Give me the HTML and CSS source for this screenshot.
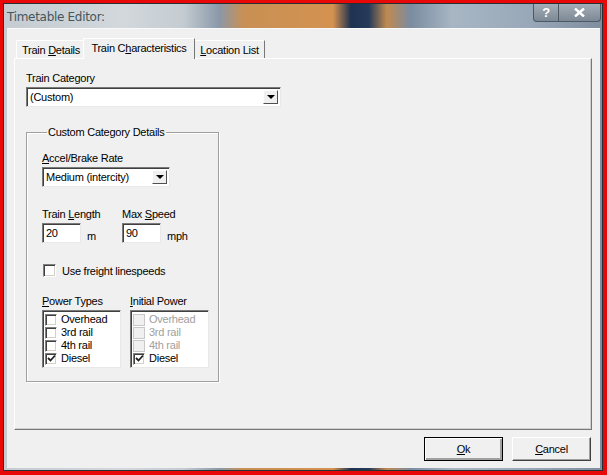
FILE: index.html
```html
<!DOCTYPE html>
<html>
<head>
<meta charset="utf-8">
<link rel="stylesheet" href="styles.css">
</head>
<body>
<div class="window">
  <div class="titlebar">
    <span class="title">Timetable Editor:</span>
    <div class="caption-btns">
      <span class="cbtn help">?</span>
      <span class="cbtn close">
        <svg width="11" height="9" viewBox="0 0 11 9"><path d="M1 0.5 L10 8.5 M10 0.5 L1 8.5" stroke="#fff" stroke-width="2.4"/></svg>
      </span>
    </div>
  </div>
  <div class="client">
    <div class="tabs">
      <div class="tab t1">Train <u>D</u>etails</div>
      <div class="tab active">Train C<u>h</u>aracteristics</div>
      <div class="tab t3"><u>L</u>ocation List</div>
    </div>
    <div class="panel">
      <div class="label">Train Category</div>
      <div class="combo wide"><span class="val">(Custom)</span><span class="arrow"></span></div>
      <fieldset class="group">
        <legend>Custom Category Details</legend>
        <div class="label"><u>A</u>ccel/Brake Rate</div>
        <div class="combo small"><span class="val">Medium (intercity)</span><span class="arrow"></span></div>
        <div class="row-fields">
          <div class="fieldcol">
            <div class="label">Train <u>L</u>ength</div>
            <div class="edit-row"><span class="edit">20</span><span class="unit">m</span></div>
          </div>
          <div class="fieldcol">
            <div class="label">Max <u>S</u>peed</div>
            <div class="edit-row"><span class="edit">90</span><span class="unit">mph</span></div>
          </div>
        </div>
        <div class="check-row"><span class="cb"></span><span>Use freight linespeeds</span></div>
        <div class="lists">
          <div class="listcol">
            <div class="label"><u>P</u>ower Types</div>
            <div class="listbox">
              <div class="item"><span class="cb"></span>Overhead</div>
              <div class="item"><span class="cb"></span>3rd rail</div>
              <div class="item"><span class="cb"></span>4th rail</div>
              <div class="item"><span class="cb checked"><svg width="9" height="9" viewBox="0 0 9 9"><path d="M1 4 L3.5 6.5 L8 1.5" fill="none" stroke="#222" stroke-width="1.8"/></svg></span>Diesel</div>
            </div>
          </div>
          <div class="listcol">
            <div class="label"><u>I</u>nitial Power</div>
            <div class="listbox">
              <div class="item dis"><span class="cb"></span>Overhead</div>
              <div class="item dis"><span class="cb"></span>3rd rail</div>
              <div class="item dis"><span class="cb"></span>4th rail</div>
              <div class="item"><span class="cb checked"><svg width="9" height="9" viewBox="0 0 9 9"><path d="M1 4 L3.5 6.5 L8 1.5" fill="none" stroke="#222" stroke-width="1.8"/></svg></span>Diesel</div>
            </div>
          </div>
        </div>
      </fieldset>
    </div>
    <div class="buttons">
      <div class="btn default"><u>O</u>k</div>
      <div class="btn"><u>C</u>ancel</div>
    </div>
  </div>
</div>
</body>
</html>
```
FILE: styles.css
```css
html, body {
  margin: 0;
  padding: 0;
}
body {
  width: 607px;
  height: 475px;
  background: #e80808;
  overflow: hidden;
  font-family: "Liberation Sans", Arial, sans-serif;
  font-size: 11px;
  letter-spacing: -0.25px;
  color: #000;
}
.window {
  margin: 3px 4px 4px 3px;
  width: 598px;
  height: 466px;
  border: 1px solid #2a2e33;
  background: linear-gradient(90deg, #c4ccd2 0%, #d2d8dc 20%, #c4ccd2 30%, #8a98a8 36%, #c89054 40%, #d49250 55%, #1f3252 58%, #263a5a 61%, #c08a50 64%, #7a8ca0 68%, #a8b6c4 75%, #98a8b8 88%, #7e8e9e 100%);
  display: flex;
  flex-direction: column;
}
.titlebar {
  height: 24px;
  display: flex;
  align-items: flex-start;
  justify-content: space-between;
}
.title {
  margin: 6px 0 0 3px;
  font-family: "DejaVu Sans", sans-serif;
  font-size: 12px;
  color: #46555c;
  letter-spacing: -0.3px;
}
.caption-btns {
  display: flex;
  margin-right: 1px;
}
.cbtn {
  height: 17px;
  border: 1px solid #4c5864;
  border-top: none;
  background: linear-gradient(#a4aeb8, #7c8894);
  display: flex;
  align-items: center;
  justify-content: center;
  color: #fff;
  font-weight: bold;
  font-size: 13px;
}
.help { width: 24px; border-radius: 0 0 0 4px; }
.close { width: 41px; border-left: none; border-radius: 0 0 4px 0; }
.client {
  flex: 1;
  margin: 0 2px 2px 3px;
  background: #f0f0f0;
  border-top: 1px solid #fafafa;
  display: flex;
  flex-direction: column;
  padding: 8px 8px 0 7px;
}
.tabs {
  display: flex;
  height: 21px;
  align-items: flex-end;
  padding-left: 2px;
  position: relative;
  z-index: 1;
}
.tab {
  height: 17px;
  line-height: 18px;
  border: 1px solid #fff;
  border-right: 1px solid #777;
  border-bottom: none;
  margin-right: -1px;
  background: #f0f0f0;
  text-align: center;
  box-sizing: content-box;
}
.t1 { width: 68px; }
.t3 { width: 69px; }
.tab.active {
  width: 110px;
  height: 20px;
  line-height: 18px;
  margin: 0 0 -1px -2px;
  background: #f0f0f0;
  position: relative;
  border-right: 1px solid #777;
}
.tab.active + .tab { margin-left: -1px; }
.panel {
  height: 357px;
  border: 1px solid #fff;
  border-right: 1px solid #777;
  border-bottom: 1px solid #777;
  box-shadow: inset -1px -1px 0 #d0d0d0;
  padding: 13px 10px 0 11px;
}
.label {
  height: 13px;
  line-height: 13px;
  margin-bottom: 2px;
  white-space: nowrap;
}
u { text-decoration: underline; text-underline-offset: 1px; }
.combo {
  height: 19px;
  border: 1px solid #7a7a7a;
  border-right-color: #e8e8e8;
  border-bottom-color: #e8e8e8;
  box-shadow: inset 1px 1px 0 #404040;
  background: #fff;
  display: flex;
  align-items: center;
  box-sizing: border-box;
  padding: 2px;
}
.combo .val { flex: 1; padding-left: 1px; white-space: nowrap; }
.combo .arrow {
  width: 15px;
  height: 14px;
  background: #f0f0f0;
  border: 1px solid #fff;
  border-right-color: #505050;
  border-bottom-color: #505050;
  box-sizing: border-box;
  position: relative;
}
.combo .arrow::after {
  content: "";
  position: absolute;
  left: 3px;
  top: 4px;
  border-left: 4px solid transparent;
  border-right: 4px solid transparent;
  border-top: 4px solid #000;
}
.combo.wide { width: 255px; height: 20px; }
.combo.small { width: 128px; height: 20px; }
.group {
  width: 164px;
  min-width: 0;
  margin: 19px 0 0 0;
  padding: 14px 12px 10px 15px;
  height: 230px;
  border: 1px solid #a0a0a0;
  box-shadow: 1px 1px 0 #fff, inset 1px 1px 0 #fff;
}
.group legend {
  padding: 0 1px;
  margin-left: 5px;
}
.row-fields {
  display: flex;
  margin-top: 21px;
}
.fieldcol { width: 80px; flex-shrink: 0; }
.fieldcol:last-child { width: auto; }
.edit-row { display: flex; align-items: center; }
.edit {
  width: 39px;
  height: 20px;
  box-sizing: border-box;
  border: 1px solid #7a7a7a;
  border-right-color: #e8e8e8;
  border-bottom-color: #e8e8e8;
  box-shadow: inset 1px 1px 0 #404040;
  background: #fff;
  padding: 3px 0 0 3px;
}
.unit { margin-left: 6px; margin-top: 5px; }
.check-row {
  display: flex;
  align-items: center;
  margin-top: 21px;
  margin-left: 1px;
}
.check-row .cb { margin-right: 6px; }
.cb {
  width: 13px;
  height: 13px;
  box-sizing: border-box;
  border: 1px solid #808080;
  border-right-color: #fff;
  border-bottom-color: #fff;
  box-shadow: inset 1px 1px 0 #404040, inset -1px -1px 0 #d4d0c8;
  background: #fff;
  display: inline-flex;
  align-items: center;
  justify-content: center;
}
.lists {
  display: flex;
  gap: 9px;
  margin-top: 18px;
}
.listbox {
  width: 79px;
  height: 58px;
  box-sizing: border-box;
  border: 1px solid #7a7a7a;
  border-right-color: #e8e8e8;
  border-bottom-color: #e8e8e8;
  box-shadow: inset 1px 1px 0 #404040;
  background: #fff;
  padding: 2px 0 0 2px;
}
.item {
  height: 13px;
  line-height: 13px;
  display: flex;
  align-items: center;
}
.item .cb { width: 12px; height: 12px; margin-right: 4px; }
.item.dis { color: #a0a0a0; }
.item.dis .cb { background: #f0f0f0; border-color: #c8c8c8; box-shadow: none; }
.buttons {
  display: flex;
  justify-content: flex-end;
  gap: 9px;
  margin-top: 7px;
  padding-right: 1px;
}
.btn {
  width: 79px;
  height: 24px;
  box-sizing: border-box;
  border: 1px solid #fff;
  border-right-color: #404040;
  border-bottom-color: #404040;
  box-shadow: inset -1px -1px 0 #a0a0a0;
  display: flex;
  align-items: center;
  justify-content: center;
  background: #f0f0f0;
}
.btn.default {
  border: 1px solid #000;
  box-shadow: inset 1px 1px 0 #fff, inset -2px -2px 0 #a0a0a0;
}
```
